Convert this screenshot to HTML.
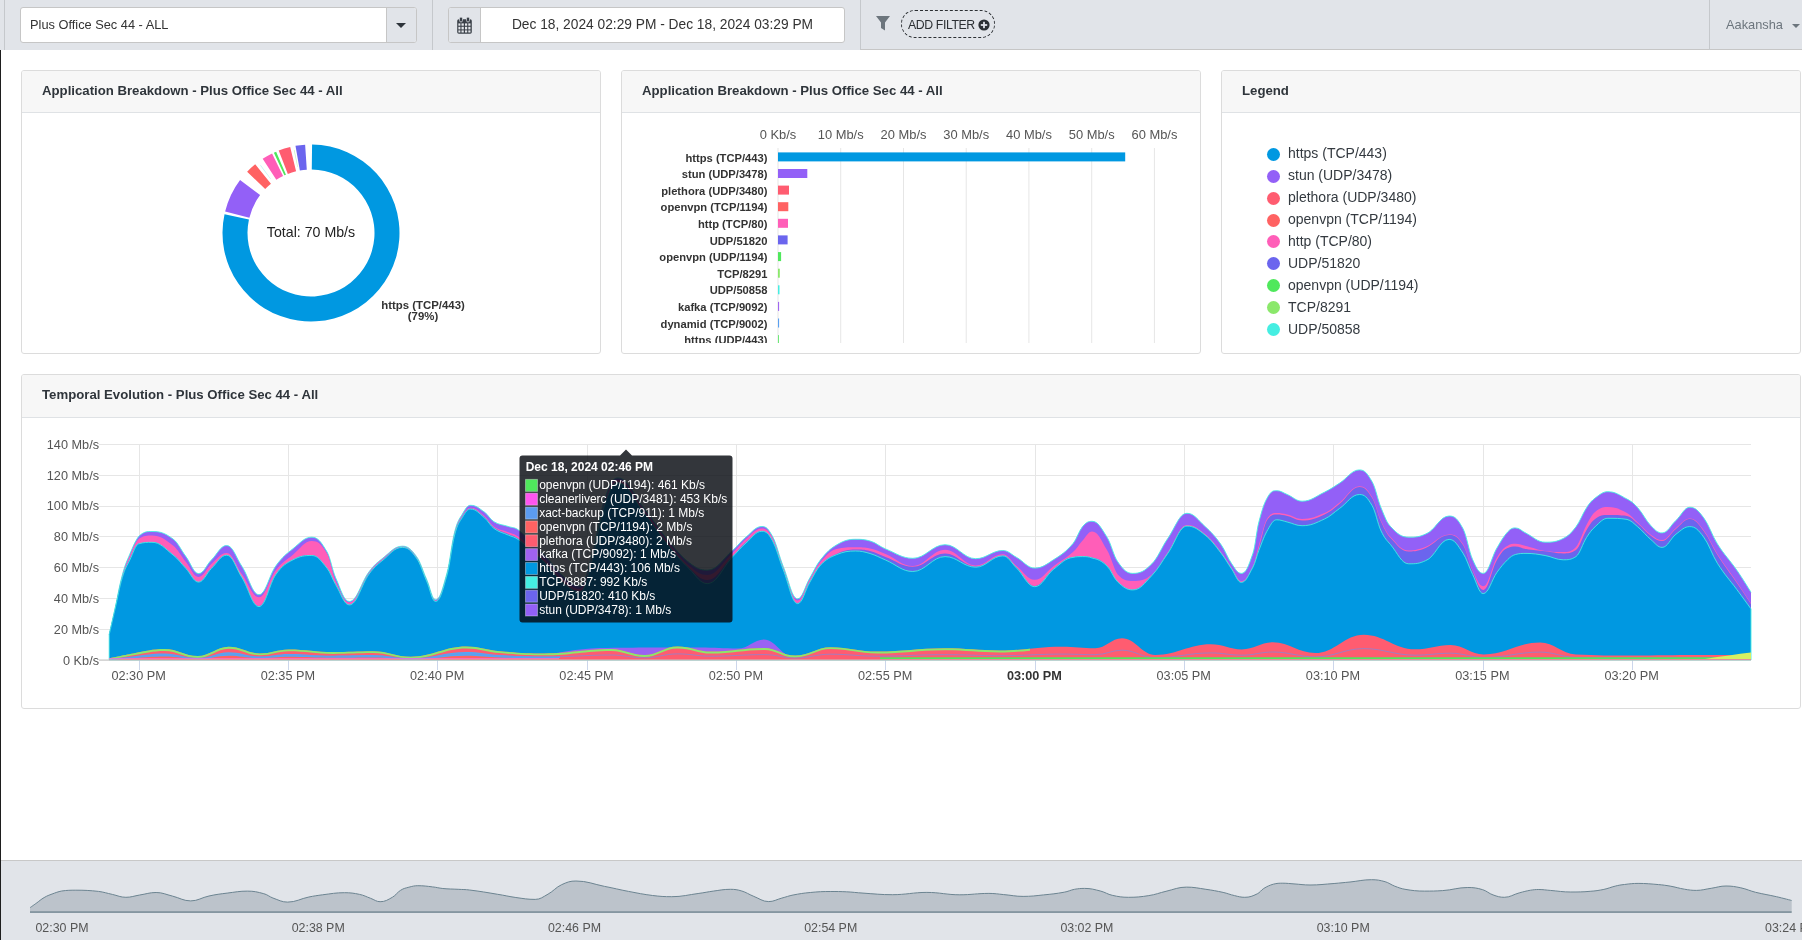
<!DOCTYPE html>
<html><head><meta charset="utf-8">
<style>
*{box-sizing:border-box;margin:0;padding:0}
html,body{width:1802px;height:940px;overflow:hidden;background:#fff;-webkit-font-smoothing:antialiased;font-family:"Liberation Sans",sans-serif;color:#333}
.abs{position:absolute}
.hdr,.panel,svg.abs{will-change:transform}
.hdr{position:absolute;left:0;top:0;width:1802px;height:50px;background:#e1e4e9}
.vsep{position:absolute;top:0;width:1px;height:50px;background:#c5c8cc}
.sel{position:absolute;left:20px;top:7px;width:397px;height:36px;border:1px solid #c6c6c6;border-radius:3px;background:#fff;overflow:hidden}
.sel .txt{position:absolute;left:9px;top:9px;font-size:12.8px;color:#333;white-space:nowrap}
.sel .btn{position:absolute;right:0;top:0;width:30px;height:34px;border-left:1px solid #c6c6c6;background:#e1e4e9}
.caret{position:absolute;width:0;height:0;border-left:5px solid transparent;border-right:5px solid transparent;border-top:5px solid #2d333a}
.dg{position:absolute;left:448px;top:7px;width:397px;height:36px;border:1px solid #c6c6c6;border-radius:3px;background:#fff;overflow:hidden}
.dg .cal{position:absolute;left:0;top:0;width:32px;height:34px;background:#e1e4e9;border-right:1px solid #c6c6c6}
.dg .txt{position:absolute;left:32px;right:0;top:9px;text-align:center;font-size:13.75px;color:#333;white-space:nowrap}
.pill{position:absolute;left:901px;top:10px;width:94px;height:28px;border:1px dashed #2b2f33;border-radius:14px}
.pill .txt{position:absolute;left:6px;top:6.5px;font-size:12.3px;letter-spacing:-0.4px;color:#2b2f33;white-space:nowrap}
.user{position:absolute;left:1726px;top:16.7px;font-size:12.8px;color:#6c757d;white-space:nowrap}
.panel{position:absolute;border:1px solid #dcdcdc;border-radius:3px;background:#fff;overflow:hidden}
.ph{position:absolute;left:0;top:0;right:0;height:42px;background:#f7f7f7;border-bottom:1px solid #dfe2e5}
.ph .t{position:absolute;left:20px;top:12px;font-size:13.2px;font-weight:bold;color:#2f353b;white-space:nowrap}
.li{position:absolute;left:66px;height:20px;font-size:14px;line-height:20px;color:#343a40;white-space:nowrap}
.li .dot{position:absolute;left:-21px;top:4.5px;width:13px;height:13px;border-radius:50%}
svg text{font-family:"Liberation Sans",sans-serif}
.ax{font-size:12.7px;fill:#555}
.bax{font-size:12.9px;fill:#555}
.ax.b{font-weight:bold;fill:#333}
.bl{font-size:11.4px;font-weight:bold;fill:#333}
.bl2{font-size:11.2px;font-weight:bold;fill:#333}
.nv{font-size:12.4px;fill:#555}
.tt{font-size:12px;fill:#fff}
.nav{position:absolute;left:1px;top:860px;width:1801px;height:80px;background:#e1e4e9;border-top:1px solid #c8c8c8}
</style></head><body>
<div class="hdr">
  <div class="vsep" style="left:4px"></div>
  <div class="sel"><div class="txt">Plus Office Sec 44 - ALL</div><div class="btn"><div class="caret" style="left:8.5px;top:15px"></div></div></div>
  <div class="vsep" style="left:432px"></div>
  <div class="dg">
    <div class="cal">
      <svg width="32" height="34" style="position:absolute;left:0;top:0">
        <rect x="8.2" y="11.3" width="14.6" height="14.4" rx="1.6" fill="#3a4048"/>
        <rect x="10.5" y="9" width="3" height="5" rx="1.5" fill="#3a4048" stroke="#e1e4e9" stroke-width="0.7"/>
        <rect x="17.5" y="9" width="3" height="5" rx="1.5" fill="#3a4048" stroke="#e1e4e9" stroke-width="0.7"/>
        <g fill="#e4e7eb">
          <rect x="9.4" y="15.4" width="2" height="2.3"/><rect x="12.5" y="15.4" width="2.3" height="2.3"/><rect x="16" y="15.4" width="2.2" height="2.3"/><rect x="19.3" y="15.4" width="2.2" height="2.3"/>
          <rect x="9.4" y="18.8" width="2" height="2.6"/><rect x="12.5" y="18.8" width="2.3" height="2.6"/><rect x="16" y="18.8" width="2.2" height="2.6"/><rect x="19.3" y="18.8" width="2.2" height="2.6"/>
          <rect x="9.4" y="22.4" width="2" height="2.1"/><rect x="12.5" y="22.4" width="2.3" height="2.1"/><rect x="16" y="22.4" width="2.2" height="2.1"/><rect x="19.3" y="22.4" width="2.2" height="2.1"/>
        </g>
      </svg>
    </div>
    <div class="txt">Dec 18, 2024 02:29 PM - Dec 18, 2024 03:29 PM</div>
  </div>
  <div class="vsep" style="left:860px"></div>
  <div class="abs" style="left:861px;top:49px;width:941px;height:1px;background:#c6c6c6"></div>
  <svg class="abs" style="left:870px;top:10px" width="28" height="28">
    <path d="M6,6 H20 L15,12.5 V20.5 L11,18 V12.5 Z" fill="#6c757d"/>
  </svg>
  <div class="pill"><div class="txt">ADD FILTER</div>
    <svg class="abs" style="left:76px;top:8px" width="12" height="12"><circle cx="6" cy="6" r="5.6" fill="#2b2f33"/><rect x="2.8" y="5.1" width="6.4" height="1.8" fill="#e1e4e9"/><rect x="5.1" y="2.8" width="1.8" height="6.4" fill="#e1e4e9"/></svg>
  </div>
  <div class="vsep" style="left:1709px"></div>
  <div class="user">Aakansha</div>
  <div class="caret" style="left:1792px;top:24px;border-left-width:4px;border-right-width:4px;border-top-width:4px;border-top-color:#6c757d"></div>
</div>
<div class="abs" style="left:0;top:50px;width:1px;height:890px;background:#1e1e1e"></div>

<div class="panel" style="left:21px;top:70px;width:580px;height:284px"><div class="ph"><div class="t">Application Breakdown - Plus Office Sec 44 - All</div></div></div>
<div class="panel" style="left:621px;top:70px;width:580px;height:284px"><div class="ph"><div class="t">Application Breakdown - Plus Office Sec 44 - All</div></div></div>
<div class="panel" style="left:1221px;top:70px;width:580px;height:284px"><div class="ph"><div class="t">Legend</div></div><div class="li" style="top:72.3px"><span class="dot" style="background:#0098e1"></span>https (TCP/443)</div><div class="li" style="top:94.2px"><span class="dot" style="background:#9360f7"></span>stun (UDP/3478)</div><div class="li" style="top:116.1px"><span class="dot" style="background:#ff5c70"></span>plethora (UDP/3480)</div><div class="li" style="top:138.0px"><span class="dot" style="background:#ff6262"></span>openvpn (TCP/1194)</div><div class="li" style="top:159.9px"><span class="dot" style="background:#ff5eb8"></span>http (TCP/80)</div><div class="li" style="top:181.8px"><span class="dot" style="background:#6b65ee"></span>UDP/51820</div><div class="li" style="top:203.7px"><span class="dot" style="background:#4fe85c"></span>openvpn (UDP/1194)</div><div class="li" style="top:225.6px"><span class="dot" style="background:#8be86b"></span>TCP/8291</div><div class="li" style="top:247.5px"><span class="dot" style="background:#45eee2"></span>UDP/50858</div></div>
<div class="panel" style="left:21px;top:374px;width:1780px;height:335px"><div class="ph" style="height:43px"><div class="t">Temporal Evolution - Plus Office Sec 44 - All</div></div></div>

<svg class="abs" style="left:0;top:0" width="1802" height="940">
  <g><path fill="#0098e1" d="M312.08,144.51A88.5,88.5 0 1 1 224.53,214.15L248.96,219.47A63.5,63.5 0 1 0 311.78,169.50Z"/><path fill="#9360f7" d="M225.13,211.59A88.5,88.5 0 0 1 240.04,180.11L260.09,195.05A63.5,63.5 0 0 0 249.39,217.64Z"/><path fill="#ff6262" d="M247.12,171.75A88.5,88.5 0 0 1 255.19,164.32L270.95,183.72A63.5,63.5 0 0 0 265.17,189.05Z"/><path fill="#ff5eb8" d="M262.67,158.86A88.5,88.5 0 0 1 272.07,153.52L283.06,175.98A63.5,63.5 0 0 0 276.32,179.80Z"/><path fill="#4fe85c" d="M273.88,152.66A88.5,88.5 0 0 1 276.14,151.66L285.98,174.63A63.5,63.5 0 0 0 284.36,175.36Z"/><path fill="#ff5c70" d="M278.71,150.60A88.5,88.5 0 0 1 290.19,146.98L296.07,171.28A63.5,63.5 0 0 0 287.83,173.88Z"/><path fill="#6b65ee" d="M295.48,145.87A88.5,88.5 0 0 1 305.13,144.69L306.79,169.64A63.5,63.5 0 0 0 299.86,170.48Z"/><path fill="#bff7f3" d="M260.15,165.52A84.5,84.5 0 0 1 260.74,165.07L270.85,178.74A67.5,67.5 0 0 0 270.38,179.09Z"/><path fill="#c9f5c5" d="M293.86,150.26A84.5,84.5 0 0 1 294.59,150.11L297.89,166.79A67.5,67.5 0 0 0 297.31,166.90Z"/></g>
  <text x="311" y="236.8" text-anchor="middle" style="font-size:14.2px;fill:#222">Total: 70 Mb/s</text>
  <text x="423" y="309.3" text-anchor="middle" class="bl">https (TCP/443)</text>
  <text x="423" y="320.3" text-anchor="middle" class="bl">(79%)</text>
  <defs><clipPath id="bc"><rect x="622" y="113" width="578" height="230"/></clipPath></defs>
  <g clip-path="url(#bc)"><rect x="777.5" y="148" width="1" height="200" fill="#e6e6e6"/><rect x="840.2" y="148" width="1" height="200" fill="#e6e6e6"/><rect x="903.0" y="148" width="1" height="200" fill="#e6e6e6"/><rect x="965.7" y="148" width="1" height="200" fill="#e6e6e6"/><rect x="1028.4" y="148" width="1" height="200" fill="#e6e6e6"/><rect x="1091.2" y="148" width="1" height="200" fill="#e6e6e6"/><rect x="1153.9" y="148" width="1" height="200" fill="#e6e6e6"/><text x="778.0" y="139.2" text-anchor="middle" class="bax">0 Kb/s</text><text x="840.7" y="139.2" text-anchor="middle" class="bax">10 Mb/s</text><text x="903.5" y="139.2" text-anchor="middle" class="bax">20 Mb/s</text><text x="966.2" y="139.2" text-anchor="middle" class="bax">30 Mb/s</text><text x="1028.9" y="139.2" text-anchor="middle" class="bax">40 Mb/s</text><text x="1091.7" y="139.2" text-anchor="middle" class="bax">50 Mb/s</text><text x="1154.4" y="139.2" text-anchor="middle" class="bax">60 Mb/s</text><rect x="778" y="152.4" width="347.2" height="9" fill="#0098e1"/><text x="767.5" y="161.5" text-anchor="end" class="bl2">https (TCP/443)</text><rect x="778" y="169.0" width="29.3" height="9" fill="#9360f7"/><text x="767.5" y="178.1" text-anchor="end" class="bl2">stun (UDP/3478)</text><rect x="778" y="185.6" width="11.0" height="9" fill="#ff5c70"/><text x="767.5" y="194.7" text-anchor="end" class="bl2">plethora (UDP/3480)</text><rect x="778" y="202.2" width="10.3" height="9" fill="#ff6262"/><text x="767.5" y="211.3" text-anchor="end" class="bl2">openvpn (TCP/1194)</text><rect x="778" y="218.8" width="10.0" height="9" fill="#ff5eb8"/><text x="767.5" y="227.9" text-anchor="end" class="bl2">http (TCP/80)</text><rect x="778" y="235.4" width="9.6" height="9" fill="#6b65ee"/><text x="767.5" y="244.5" text-anchor="end" class="bl2">UDP/51820</text><rect x="778" y="252.1" width="3.1" height="9" fill="#4fe85c"/><text x="767.5" y="261.2" text-anchor="end" class="bl2">openvpn (UDP/1194)</text><rect x="778" y="268.7" width="1.8" height="9" fill="#8be86b"/><text x="767.5" y="277.8" text-anchor="end" class="bl2">TCP/8291</text><rect x="778" y="285.3" width="1.5" height="9" fill="#45eee2"/><text x="767.5" y="294.4" text-anchor="end" class="bl2">UDP/50858</text><rect x="778" y="301.9" width="1.1" height="9" fill="#a066f0"/><text x="767.5" y="311.0" text-anchor="end" class="bl2">kafka (TCP/9092)</text><rect x="778" y="318.5" width="1.1" height="9" fill="#5aa0f0"/><text x="767.5" y="327.6" text-anchor="end" class="bl2">dynamid (TCP/9002)</text><rect x="778" y="335.1" width="0.8" height="9" fill="#4fe85c"/><text x="767.5" y="344.2" text-anchor="end" class="bl2">https (UDP/443)</text></g>
  <g><rect x="99" y="444" width="1652" height="1" fill="#e6e6e6"/><text x="99" y="448.6" text-anchor="end" class="ax">140 Mb/s</text><rect x="99" y="475" width="1652" height="1" fill="#e6e6e6"/><text x="99" y="479.5" text-anchor="end" class="ax">120 Mb/s</text><rect x="99" y="506" width="1652" height="1" fill="#e6e6e6"/><text x="99" y="510.3" text-anchor="end" class="ax">100 Mb/s</text><rect x="99" y="536" width="1652" height="1" fill="#e6e6e6"/><text x="99" y="541.2" text-anchor="end" class="ax">80 Mb/s</text><rect x="99" y="567" width="1652" height="1" fill="#e6e6e6"/><text x="99" y="572.0" text-anchor="end" class="ax">60 Mb/s</text><rect x="99" y="598" width="1652" height="1" fill="#e6e6e6"/><text x="99" y="602.9" text-anchor="end" class="ax">40 Mb/s</text><rect x="99" y="629" width="1652" height="1" fill="#e6e6e6"/><text x="99" y="633.8" text-anchor="end" class="ax">20 Mb/s</text><text x="99" y="664.6" text-anchor="end" class="ax">0 Kb/s</text><rect x="139" y="444" width="1" height="216" fill="#e6e6e6"/><rect x="139" y="660" width="1" height="10" fill="#ccd6eb"/><text x="138.6" y="680.3" text-anchor="middle" class="ax">02:30 PM</text><rect x="288" y="444" width="1" height="216" fill="#e6e6e6"/><rect x="288" y="660" width="1" height="10" fill="#ccd6eb"/><text x="287.9" y="680.3" text-anchor="middle" class="ax">02:35 PM</text><rect x="437" y="444" width="1" height="216" fill="#e6e6e6"/><rect x="437" y="660" width="1" height="10" fill="#ccd6eb"/><text x="437.2" y="680.3" text-anchor="middle" class="ax">02:40 PM</text><rect x="587" y="444" width="1" height="216" fill="#e6e6e6"/><rect x="587" y="660" width="1" height="10" fill="#ccd6eb"/><text x="586.5" y="680.3" text-anchor="middle" class="ax">02:45 PM</text><rect x="736" y="444" width="1" height="216" fill="#e6e6e6"/><rect x="736" y="660" width="1" height="10" fill="#ccd6eb"/><text x="735.8" y="680.3" text-anchor="middle" class="ax">02:50 PM</text><rect x="885" y="444" width="1" height="216" fill="#e6e6e6"/><rect x="885" y="660" width="1" height="10" fill="#ccd6eb"/><text x="885.1" y="680.3" text-anchor="middle" class="ax">02:55 PM</text><rect x="1035" y="444" width="1" height="216" fill="#e6e6e6"/><rect x="1035" y="660" width="1" height="10" fill="#ccd6eb"/><text x="1034.4" y="680.3" text-anchor="middle" class="ax b">03:00 PM</text><rect x="1184" y="444" width="1" height="216" fill="#e6e6e6"/><rect x="1184" y="660" width="1" height="10" fill="#ccd6eb"/><text x="1183.7" y="680.3" text-anchor="middle" class="ax">03:05 PM</text><rect x="1333" y="444" width="1" height="216" fill="#e6e6e6"/><rect x="1333" y="660" width="1" height="10" fill="#ccd6eb"/><text x="1333.0" y="680.3" text-anchor="middle" class="ax">03:10 PM</text><rect x="1483" y="444" width="1" height="216" fill="#e6e6e6"/><rect x="1483" y="660" width="1" height="10" fill="#ccd6eb"/><text x="1482.3" y="680.3" text-anchor="middle" class="ax">03:15 PM</text><rect x="1632" y="444" width="1" height="216" fill="#e6e6e6"/><rect x="1632" y="660" width="1" height="10" fill="#ccd6eb"/><text x="1631.6" y="680.3" text-anchor="middle" class="ax">03:20 PM</text><path fill="#9360f7" d="M109.2,634.6C109.2,634.6,112.6,619.7,114.9,609.3C117.9,595.9,119.3,586.0,122.3,575.1C125.3,564.0,126.8,561.3,129.8,554.2C133.4,545.8,135.1,541.3,138.7,536.4C144.0,531.5,146.7,531.5,152.0,531.5C160.4,531.5,164.6,532.8,173.0,539.0C178.2,542.8,180.7,549.6,185.9,556.6C191.0,563.5,193.5,573.6,198.6,573.6C203.7,573.6,206.3,565.1,211.4,560.0C217.5,553.9,220.6,545.5,226.7,545.5C232.8,545.5,235.9,557.3,242.0,566.6C248.8,577.0,252.2,594.7,259.0,594.7C265.8,594.7,269.2,574.9,276.0,565.7C282.8,556.5,286.2,554.1,293.0,548.7C300.5,542.7,304.3,537.2,311.8,537.2C317.9,537.2,321.0,541.7,327.1,552.1C330.5,557.9,332.2,570.1,335.6,577.7C341.1,589.9,343.8,601.5,349.3,601.5C357.2,601.5,361.2,582.0,369.1,571.7C374.2,565.0,376.8,562.8,381.9,558.9C390.1,552.6,394.1,546.2,402.3,546.2C407.9,546.2,410.8,548.7,416.4,556.4C420.5,562.0,422.5,570.1,426.6,579.3C430.2,587.4,431.9,599.7,435.5,599.7C440.1,599.7,442.4,589.3,447.0,573.0C450.0,562.2,451.6,543.8,454.6,532.1C457.7,520.3,459.2,519.4,462.3,514.2C465.6,508.6,467.3,505.3,470.6,505.3C476.1,505.3,478.9,508.2,484.4,512.1C488.2,514.8,490.1,519.4,493.9,521.7C499.7,525.2,502.5,524.5,508.3,526.5C512.5,528.0,514.6,527.0,518.8,530.3C529.3,538.6,534.5,544.8,545.0,555.6C551.8,562.6,555.2,569.1,562.0,575.0C569.2,581.3,572.8,586.0,580.0,586.0C584.8,586.0,587.2,571.9,592.0,555.0C597.0,537.5,599.4,514.8,604.4,500.0C609.8,483.9,612.5,477.9,617.9,477.9C628.6,477.9,634.0,495.9,644.7,509.2C653.6,520.3,658.1,528.2,667.0,538.9C676.0,549.6,680.4,555.8,689.4,562.8C696.5,568.3,700.1,570.2,707.2,570.2C717.4,570.2,722.4,559.1,732.6,550.4C738.0,545.8,740.6,541.5,746.0,537.1C752.4,531.9,755.5,526.5,761.9,526.5C766.2,526.5,768.3,528.6,772.6,536.6C776.8,544.5,779.0,555.9,783.2,566.4C789.0,580.7,791.8,598.8,797.6,598.8C802.5,598.8,804.9,586.4,809.8,578.1C814.0,570.9,816.2,565.3,820.4,560.0C826.8,552.1,830.0,548.9,836.4,545.1C844.0,540.6,847.9,539.3,855.5,539.3C861.3,539.3,864.2,539.3,870.0,541.0C876.2,542.7,879.3,546.4,885.5,548.9C896.4,553.3,901.9,558.3,912.8,558.3C925.7,558.3,932.2,544.7,945.1,544.7C957.3,544.7,963.5,558.7,975.7,558.7C986.5,558.7,992.0,550.5,1002.8,550.5C1008.3,550.5,1011.1,554.4,1016.6,557.4C1023.8,561.4,1027.5,568.1,1034.7,568.1C1042.3,568.1,1046.2,564.5,1053.8,559.6C1061.5,554.7,1065.3,552.4,1073.0,543.6C1076.8,539.2,1078.8,531.1,1082.6,526.6C1086.4,522.2,1088.3,521.3,1092.1,521.3C1098.1,521.3,1101.0,527.8,1107.0,537.2C1111.3,544.0,1113.4,555.7,1117.7,561.7C1123.7,570.2,1126.8,573.4,1132.8,573.4C1140.4,573.4,1144.3,571.4,1151.9,563.8C1158.3,557.4,1161.5,547.5,1167.9,538.3C1175.5,527.3,1179.4,513.3,1187.0,513.3C1194.2,513.3,1197.9,519.9,1205.1,526.6C1211.5,532.5,1214.7,535.7,1221.1,544.7C1225.3,550.6,1227.5,557.8,1231.7,563.8C1235.5,569.3,1237.5,573.4,1241.3,573.4C1246.0,573.4,1248.3,566.9,1253.0,553.2C1255.4,546.3,1256.5,530.9,1258.9,522.0C1262.5,508.3,1264.3,502.7,1267.9,496.7C1271.5,490.7,1273.2,490.7,1276.8,490.7C1281.0,490.7,1283.0,492.8,1287.2,494.5C1293.2,497.0,1296.1,501.2,1302.1,501.2C1311.1,501.2,1315.5,496.5,1324.5,492.2C1330.5,489.3,1333.4,487.1,1339.4,483.3C1347.4,478.2,1351.5,469.9,1359.5,469.9C1364.5,469.9,1367.1,472.9,1372.1,481.8C1375.7,488.1,1377.5,499.3,1381.1,508.0C1384.9,517.2,1386.8,522.6,1390.6,526.6C1397.8,534.3,1401.5,537.2,1408.7,537.2C1415.5,537.2,1418.9,537.2,1425.7,534.0C1435.1,530.8,1439.7,516.0,1449.1,516.0C1454.7,516.0,1457.4,518.4,1463.0,528.7C1466.8,535.8,1468.8,551.1,1472.6,559.6C1476.8,569.0,1479.0,573.4,1483.2,573.4C1488.7,573.4,1491.5,557.3,1497.0,547.9C1501.3,540.7,1503.4,536.6,1507.7,531.9C1510.7,528.6,1512.3,527.9,1515.3,527.9C1519.6,527.9,1521.7,531.1,1526.0,533.2C1533.6,536.9,1537.5,542.2,1545.1,542.2C1552.3,542.2,1556.0,542.1,1563.2,538.5C1568.3,535.9,1570.9,533.5,1576.0,526.8C1580.2,521.2,1582.4,514.1,1586.6,507.7C1590.0,502.6,1591.7,500.7,1595.1,498.1C1600.2,494.3,1602.8,491.7,1607.9,491.7C1615.5,491.7,1619.4,495.0,1627.0,499.1C1631.3,501.4,1633.4,502.9,1637.7,507.7C1643.1,513.7,1645.7,520.4,1651.1,525.9C1655.5,530.4,1657.7,532.9,1662.1,532.9C1667.7,532.9,1670.4,525.5,1676.0,520.4C1681.5,515.3,1684.3,507.3,1689.8,507.3C1695.3,507.3,1698.1,510.4,1703.6,517.7C1709.1,525.0,1711.9,535.2,1717.4,543.9C1725.2,556.2,1729.0,559.0,1736.8,570.2C1742.5,578.4,1751.0,592.3,1751.0,592.3L1751.0,660L109.2,660Z"/><path fill="none" stroke="#45eee2" stroke-width="0.9" d="M109.2,634.6C109.2,634.6,112.6,619.7,114.9,609.3C117.9,595.9,119.3,586.0,122.3,575.1C125.3,564.0,126.8,561.3,129.8,554.2C133.4,545.8,135.1,541.3,138.7,536.4C144.0,531.5,146.7,531.5,152.0,531.5C160.4,531.5,164.6,532.8,173.0,539.0C178.2,542.8,180.7,549.6,185.9,556.6C191.0,563.5,193.5,573.6,198.6,573.6C203.7,573.6,206.3,565.1,211.4,560.0C217.5,553.9,220.6,545.5,226.7,545.5C232.8,545.5,235.9,557.3,242.0,566.6C248.8,577.0,252.2,594.7,259.0,594.7C265.8,594.7,269.2,574.9,276.0,565.7C282.8,556.5,286.2,554.1,293.0,548.7C300.5,542.7,304.3,537.2,311.8,537.2C317.9,537.2,321.0,541.7,327.1,552.1C330.5,557.9,332.2,570.1,335.6,577.7C341.1,589.9,343.8,601.5,349.3,601.5C357.2,601.5,361.2,582.0,369.1,571.7C374.2,565.0,376.8,562.8,381.9,558.9C390.1,552.6,394.1,546.2,402.3,546.2C407.9,546.2,410.8,548.7,416.4,556.4C420.5,562.0,422.5,570.1,426.6,579.3C430.2,587.4,431.9,599.7,435.5,599.7C440.1,599.7,442.4,589.3,447.0,573.0C450.0,562.2,451.6,543.8,454.6,532.1C457.7,520.3,459.2,519.4,462.3,514.2C465.6,508.6,467.3,505.3,470.6,505.3C476.1,505.3,478.9,508.2,484.4,512.1C488.2,514.8,490.1,519.4,493.9,521.7C499.7,525.2,502.5,524.5,508.3,526.5C512.5,528.0,514.6,527.0,518.8,530.3C529.3,538.6,534.5,544.8,545.0,555.6C551.8,562.6,555.2,569.1,562.0,575.0C569.2,581.3,572.8,586.0,580.0,586.0C584.8,586.0,587.2,571.9,592.0,555.0C597.0,537.5,599.4,514.8,604.4,500.0C609.8,483.9,612.5,477.9,617.9,477.9C628.6,477.9,634.0,495.9,644.7,509.2C653.6,520.3,658.1,528.2,667.0,538.9C676.0,549.6,680.4,555.8,689.4,562.8C696.5,568.3,700.1,570.2,707.2,570.2C717.4,570.2,722.4,559.1,732.6,550.4C738.0,545.8,740.6,541.5,746.0,537.1C752.4,531.9,755.5,526.5,761.9,526.5C766.2,526.5,768.3,528.6,772.6,536.6C776.8,544.5,779.0,555.9,783.2,566.4C789.0,580.7,791.8,598.8,797.6,598.8C802.5,598.8,804.9,586.4,809.8,578.1C814.0,570.9,816.2,565.3,820.4,560.0C826.8,552.1,830.0,548.9,836.4,545.1C844.0,540.6,847.9,539.3,855.5,539.3C861.3,539.3,864.2,539.3,870.0,541.0C876.2,542.7,879.3,546.4,885.5,548.9C896.4,553.3,901.9,558.3,912.8,558.3C925.7,558.3,932.2,544.7,945.1,544.7C957.3,544.7,963.5,558.7,975.7,558.7C986.5,558.7,992.0,550.5,1002.8,550.5C1008.3,550.5,1011.1,554.4,1016.6,557.4C1023.8,561.4,1027.5,568.1,1034.7,568.1C1042.3,568.1,1046.2,564.5,1053.8,559.6C1061.5,554.7,1065.3,552.4,1073.0,543.6C1076.8,539.2,1078.8,531.1,1082.6,526.6C1086.4,522.2,1088.3,521.3,1092.1,521.3C1098.1,521.3,1101.0,527.8,1107.0,537.2C1111.3,544.0,1113.4,555.7,1117.7,561.7C1123.7,570.2,1126.8,573.4,1132.8,573.4C1140.4,573.4,1144.3,571.4,1151.9,563.8C1158.3,557.4,1161.5,547.5,1167.9,538.3C1175.5,527.3,1179.4,513.3,1187.0,513.3C1194.2,513.3,1197.9,519.9,1205.1,526.6C1211.5,532.5,1214.7,535.7,1221.1,544.7C1225.3,550.6,1227.5,557.8,1231.7,563.8C1235.5,569.3,1237.5,573.4,1241.3,573.4C1246.0,573.4,1248.3,566.9,1253.0,553.2C1255.4,546.3,1256.5,530.9,1258.9,522.0C1262.5,508.3,1264.3,502.7,1267.9,496.7C1271.5,490.7,1273.2,490.7,1276.8,490.7C1281.0,490.7,1283.0,492.8,1287.2,494.5C1293.2,497.0,1296.1,501.2,1302.1,501.2C1311.1,501.2,1315.5,496.5,1324.5,492.2C1330.5,489.3,1333.4,487.1,1339.4,483.3C1347.4,478.2,1351.5,469.9,1359.5,469.9C1364.5,469.9,1367.1,472.9,1372.1,481.8C1375.7,488.1,1377.5,499.3,1381.1,508.0C1384.9,517.2,1386.8,522.6,1390.6,526.6C1397.8,534.3,1401.5,537.2,1408.7,537.2C1415.5,537.2,1418.9,537.2,1425.7,534.0C1435.1,530.8,1439.7,516.0,1449.1,516.0C1454.7,516.0,1457.4,518.4,1463.0,528.7C1466.8,535.8,1468.8,551.1,1472.6,559.6C1476.8,569.0,1479.0,573.4,1483.2,573.4C1488.7,573.4,1491.5,557.3,1497.0,547.9C1501.3,540.7,1503.4,536.6,1507.7,531.9C1510.7,528.6,1512.3,527.9,1515.3,527.9C1519.6,527.9,1521.7,531.1,1526.0,533.2C1533.6,536.9,1537.5,542.2,1545.1,542.2C1552.3,542.2,1556.0,542.1,1563.2,538.5C1568.3,535.9,1570.9,533.5,1576.0,526.8C1580.2,521.2,1582.4,514.1,1586.6,507.7C1590.0,502.6,1591.7,500.7,1595.1,498.1C1600.2,494.3,1602.8,491.7,1607.9,491.7C1615.5,491.7,1619.4,495.0,1627.0,499.1C1631.3,501.4,1633.4,502.9,1637.7,507.7C1643.1,513.7,1645.7,520.4,1651.1,525.9C1655.5,530.4,1657.7,532.9,1662.1,532.9C1667.7,532.9,1670.4,525.5,1676.0,520.4C1681.5,515.3,1684.3,507.3,1689.8,507.3C1695.3,507.3,1698.1,510.4,1703.6,517.7C1709.1,525.0,1711.9,535.2,1717.4,543.9C1725.2,556.2,1729.0,559.0,1736.8,570.2C1742.5,578.4,1751.0,592.3,1751.0,592.3"/><path fill="#ff5eb8" d="M109.2,634.6C109.2,634.6,112.6,619.7,114.9,609.5C117.9,596.3,119.3,586.6,122.3,576.0C125.3,565.2,126.8,562.8,129.8,556.0C133.4,548.0,135.1,542.5,138.7,539.0C144.0,535.5,146.7,535.5,152.0,535.5C160.4,535.5,164.6,538.9,173.0,545.5C178.2,549.5,180.7,555.7,185.9,562.0C191.0,568.3,193.5,577.0,198.6,577.0C203.7,577.0,206.3,568.4,211.4,564.0C217.5,558.8,220.6,553.0,226.7,553.0C232.8,553.0,235.9,565.9,242.0,574.3C248.8,583.6,252.2,597.2,259.0,597.2C265.8,597.2,269.2,578.5,276.0,570.0C282.8,561.5,286.2,560.2,293.0,554.7C300.5,548.6,304.3,541.0,311.8,541.0C317.9,541.0,321.0,543.5,327.1,553.8C330.5,559.5,332.2,573.5,335.6,581.0C341.1,593.0,343.8,602.5,349.3,602.5C357.2,602.5,361.2,582.9,369.1,572.5C374.2,565.7,376.8,563.5,381.9,559.5C390.1,553.2,394.1,546.8,402.3,546.8C407.9,546.8,410.8,549.3,416.4,557.0C420.5,562.6,422.5,570.7,426.6,580.0C430.2,588.1,431.9,600.5,435.5,600.5C440.1,600.5,442.4,590.3,447.0,574.0C450.0,563.3,451.6,544.6,454.6,533.0C457.7,521.2,459.2,520.4,462.3,515.5C465.6,510.3,467.3,507.8,470.6,507.8C476.1,507.8,478.9,511.5,484.4,515.9C488.2,518.9,490.1,523.9,493.9,526.5C499.7,530.4,502.5,529.8,508.3,532.2C512.5,534.0,514.6,533.8,518.8,537.0C529.3,544.9,534.5,549.8,545.0,560.0C551.8,566.6,555.2,573.4,562.0,579.0C569.2,585.0,572.8,589.0,580.0,589.0C584.8,589.0,587.2,574.9,592.0,558.0C597.0,540.5,599.4,517.9,604.4,503.0C609.8,486.7,612.5,480.0,617.9,480.0C628.6,480.0,634.0,497.7,644.7,511.0C653.6,522.1,658.1,530.0,667.0,541.0C676.0,552.0,680.4,558.4,689.4,566.0C696.5,572.0,700.1,575.0,707.2,575.0C717.4,575.0,722.4,562.4,732.6,553.0C738.0,548.0,740.6,543.5,746.0,539.0C752.4,533.7,755.5,528.5,761.9,528.5C766.2,528.5,768.3,530.2,772.6,538.0C776.8,545.8,779.0,556.9,783.2,567.5C789.0,581.9,791.8,600.5,797.6,600.5C802.5,600.5,804.9,587.7,809.8,579.5C814.0,572.3,816.2,566.9,820.4,562.0C826.8,554.7,830.0,550.8,836.4,549.0C844.0,547.2,847.9,547.2,855.5,547.2C861.3,547.2,864.2,547.2,870.0,548.5C876.2,549.8,879.3,551.5,885.5,554.0C896.4,558.5,901.9,566.0,912.8,566.0C925.7,566.0,932.2,549.8,945.1,549.8C957.3,549.8,963.5,565.5,975.7,565.5C986.5,565.5,992.0,554.3,1002.8,554.3C1008.3,554.3,1011.1,561.6,1016.6,566.0C1023.8,571.8,1027.5,579.8,1034.7,579.8C1042.3,579.8,1046.2,571.5,1053.8,566.0C1061.5,560.4,1065.3,558.9,1073.0,552.1C1076.8,548.7,1078.8,544.6,1082.6,540.4C1086.4,536.3,1088.3,531.4,1092.1,531.4C1098.1,531.4,1101.0,540.0,1107.0,550.0C1111.3,557.2,1113.4,568.1,1117.7,574.5C1123.7,580.9,1126.8,580.9,1132.8,580.9C1140.4,580.9,1144.3,580.8,1151.9,574.5C1158.3,569.2,1161.5,561.0,1167.9,552.0C1175.5,541.2,1179.4,525.0,1187.0,525.0C1194.2,525.0,1197.9,528.3,1205.1,534.0C1211.5,539.1,1214.7,543.8,1221.1,552.0C1225.3,557.4,1227.5,561.9,1231.7,568.0C1235.5,573.5,1237.5,581.0,1241.3,581.0C1246.0,581.0,1248.3,575.6,1253.0,566.0C1255.4,561.2,1256.5,552.7,1258.9,545.0C1262.5,533.3,1264.3,522.1,1267.9,517.6C1271.5,513.1,1273.2,513.1,1276.8,513.1C1281.0,513.1,1283.0,513.6,1287.2,514.6C1293.2,516.0,1296.1,519.0,1302.1,519.0C1311.1,519.0,1315.5,517.0,1324.5,513.1C1330.5,510.5,1333.4,507.3,1339.4,502.7C1347.4,496.5,1351.5,486.3,1359.5,486.3C1364.5,486.3,1367.1,488.9,1372.1,497.0C1375.7,502.8,1377.5,513.2,1381.1,521.0C1384.9,529.2,1386.8,532.9,1390.6,537.0C1397.8,544.7,1401.5,550.5,1408.7,550.5C1415.5,550.5,1418.9,549.5,1425.7,546.8C1435.1,543.1,1439.7,534.5,1449.1,534.5C1454.7,534.5,1457.4,535.6,1463.0,544.0C1466.8,549.8,1468.8,562.0,1472.6,570.0C1476.8,578.9,1479.0,586.2,1483.2,586.2C1488.7,586.2,1491.5,566.5,1497.0,557.4C1501.3,550.3,1503.4,547.6,1507.7,545.7C1510.7,543.8,1512.3,543.8,1515.3,543.8C1519.6,543.8,1521.7,545.0,1526.0,546.0C1533.6,547.8,1537.5,550.0,1545.1,551.0C1552.3,552.0,1556.0,552.0,1563.2,552.0C1568.3,552.0,1570.9,552.0,1576.0,547.0C1580.2,542.0,1582.4,532.5,1586.6,524.7C1590.0,518.5,1591.7,514.7,1595.1,511.9C1600.2,507.7,1602.8,507.1,1607.9,507.1C1615.5,507.1,1619.4,509.0,1627.0,513.0C1631.3,515.2,1633.4,518.7,1637.7,522.6C1643.1,527.5,1645.7,531.2,1651.1,535.0C1655.5,538.1,1657.7,540.0,1662.1,540.0C1667.7,540.0,1670.4,532.3,1676.0,528.0C1681.5,523.7,1684.3,518.5,1689.8,518.5C1695.3,518.5,1698.1,522.9,1703.6,530.0C1709.1,537.1,1711.9,545.4,1717.4,554.0C1725.2,566.2,1729.0,570.6,1736.8,582.0C1742.5,590.4,1751.0,603.4,1751.0,603.4L1751.0,660L109.2,660Z"/><path fill="#6b65ee" d="M109.2,634.6C109.2,634.6,112.6,619.6,114.9,609.6C117.9,596.6,119.3,587.1,122.3,577.0C125.3,566.8,126.8,565.1,129.8,559.0C133.4,551.7,135.1,545.0,138.7,543.5C144.0,542.0,146.7,542.0,152.0,542.0C160.4,542.0,164.6,548.1,173.0,554.5C178.2,558.5,180.7,562.5,185.9,568.0C191.0,573.5,193.5,582.0,198.6,582.0C203.7,582.0,206.3,572.9,211.4,568.0C217.5,562.1,220.6,555.0,226.7,555.0C232.8,555.0,235.9,567.8,242.0,577.5C248.8,588.2,252.2,606.0,259.0,606.0C265.8,606.0,269.2,583.3,276.0,574.0C282.8,564.7,286.2,563.1,293.0,559.5C300.5,555.5,304.3,555.0,311.8,555.0C317.9,555.0,321.0,560.5,327.1,568.0C330.5,572.1,332.2,578.4,335.6,584.0C341.1,593.0,343.8,604.5,349.3,604.5C357.2,604.5,361.2,584.2,369.1,573.5C374.2,566.6,376.8,564.6,381.9,560.5C390.1,554.0,394.1,547.2,402.3,547.2C407.9,547.2,410.8,549.8,416.4,557.5C420.5,563.1,422.5,571.2,426.6,580.5C430.2,588.6,431.9,601.0,435.5,601.0C440.1,601.0,442.4,590.6,447.0,574.5C450.0,563.8,451.6,545.5,454.6,534.0C457.7,522.3,459.2,521.4,462.3,516.5C465.6,511.2,467.3,508.5,470.6,508.5C476.1,508.5,478.9,512.5,484.4,517.0C488.2,520.1,490.1,524.8,493.9,527.5C499.7,531.6,502.5,531.3,508.3,534.0C512.5,535.9,514.6,535.8,518.8,539.0C529.3,547.0,534.5,551.8,545.0,562.0C551.8,568.6,555.2,575.4,562.0,581.0C569.2,587.0,572.8,591.0,580.0,591.0C584.8,591.0,587.2,576.9,592.0,560.0C597.0,542.5,599.4,519.9,604.4,505.0C609.8,488.7,612.5,482.0,617.9,482.0C628.6,482.0,634.0,499.7,644.7,513.0C653.6,524.1,658.1,532.0,667.0,543.0C676.0,554.0,680.4,559.8,689.4,568.0C696.5,574.6,700.1,580.0,707.2,580.0C717.4,580.0,722.4,566.0,732.6,556.0C738.0,550.8,740.6,546.6,746.0,542.0C752.4,536.6,755.5,531.0,761.9,531.0C766.2,531.0,768.3,532.9,772.6,540.5C776.8,548.1,779.0,558.4,783.2,569.0C789.0,583.4,791.8,603.0,797.6,603.0C802.5,603.0,804.9,590.1,809.8,582.0C814.0,574.9,816.2,569.5,820.4,565.0C826.8,558.3,830.0,556.8,836.4,554.0C844.0,550.6,847.9,549.5,855.5,549.5C861.3,549.5,864.2,549.5,870.0,551.0C876.2,552.5,879.3,554.7,885.5,557.0C896.4,561.0,901.9,566.8,912.8,566.8C925.7,566.8,932.2,553.6,945.1,553.6C957.3,553.6,963.5,566.4,975.7,566.4C986.5,566.4,992.0,555.5,1002.8,555.5C1008.3,555.5,1011.1,562.2,1016.6,567.5C1023.8,574.4,1027.5,586.0,1034.7,586.0C1042.3,586.0,1046.2,574.3,1053.8,568.5C1061.5,562.7,1065.3,557.5,1073.0,557.0C1076.8,556.5,1078.8,556.5,1082.6,556.5C1086.4,556.5,1088.3,556.5,1092.1,557.5C1098.1,558.5,1101.0,559.9,1107.0,565.5C1111.3,569.5,1113.4,577.5,1117.7,581.5C1123.7,587.1,1126.8,589.5,1132.8,589.5C1140.4,589.5,1144.3,582.9,1151.9,575.0C1158.3,568.3,1161.5,561.9,1167.9,553.0C1175.5,542.3,1179.4,526.0,1187.0,526.0C1194.2,526.0,1197.9,529.3,1205.1,535.0C1211.5,540.1,1214.7,544.8,1221.1,553.0C1225.3,558.4,1227.5,562.9,1231.7,569.0C1235.5,574.5,1237.5,582.0,1241.3,582.0C1246.0,582.0,1248.3,576.0,1253.0,567.0C1255.4,562.4,1256.5,555.6,1258.9,548.0C1262.5,536.4,1264.3,523.5,1267.9,519.0C1271.5,514.5,1273.2,514.5,1276.8,514.5C1281.0,514.5,1283.0,515.0,1287.2,516.0C1293.2,517.4,1296.1,520.5,1302.1,520.5C1311.1,520.5,1315.5,518.5,1324.5,514.5C1330.5,511.9,1333.4,508.7,1339.4,504.0C1347.4,497.7,1351.5,487.0,1359.5,487.0C1364.5,487.0,1367.1,489.8,1372.1,498.0C1375.7,503.8,1377.5,514.2,1381.1,522.0C1384.9,530.2,1386.8,533.9,1390.6,538.0C1397.8,545.7,1401.5,551.5,1408.7,551.5C1415.5,551.5,1418.9,550.8,1425.7,548.0C1435.1,544.2,1439.7,535.0,1449.1,535.0C1454.7,535.0,1457.4,536.5,1463.0,545.0C1466.8,550.9,1468.8,562.4,1472.6,571.0C1476.8,580.4,1479.0,590.0,1483.2,590.0C1488.7,590.0,1491.5,569.5,1497.0,560.0C1501.3,552.7,1503.4,549.5,1507.7,548.0C1510.7,546.5,1512.3,546.5,1515.3,546.5C1519.6,546.5,1521.7,548.4,1526.0,549.1C1533.6,550.3,1537.5,550.4,1545.1,551.3C1552.3,552.1,1556.0,553.4,1563.2,553.4C1568.3,553.4,1570.9,553.4,1576.0,550.0C1580.2,546.6,1582.4,536.9,1586.6,530.0C1590.0,524.5,1591.7,521.4,1595.1,519.0C1600.2,515.4,1602.8,515.1,1607.9,515.1C1615.5,515.1,1619.4,515.1,1627.0,516.0C1631.3,516.9,1633.4,519.9,1637.7,523.5C1643.1,527.9,1645.7,532.2,1651.1,536.0C1655.5,539.2,1657.7,541.0,1662.1,541.0C1667.7,541.0,1670.4,533.4,1676.0,529.0C1681.5,524.6,1684.3,519.0,1689.8,519.0C1695.3,519.0,1698.1,523.8,1703.6,531.0C1709.1,538.2,1711.9,546.4,1717.4,555.0C1725.2,567.2,1729.0,571.7,1736.8,583.0C1742.5,591.3,1751.0,604.0,1751.0,604.0L1751.0,660L109.2,660Z"/><path fill="#0098e1" stroke="#45eee2" stroke-width="0.9" d="M109.2,634.6C109.2,634.6,112.6,619.6,114.9,609.7C117.9,596.8,119.3,587.4,122.3,577.5C125.3,567.5,126.8,566.2,129.8,560.0C133.4,552.7,135.1,545.3,138.7,543.8C144.0,542.3,146.7,542.3,152.0,542.3C160.4,542.3,164.6,548.4,173.0,554.9C178.2,558.9,180.7,563.0,185.9,568.5C191.0,573.9,193.5,582.1,198.6,582.1C203.7,582.1,206.3,573.4,211.4,568.5C217.5,562.6,220.6,555.2,226.7,555.2C232.8,555.2,235.9,568.0,242.0,577.7C248.8,588.5,252.2,606.6,259.0,606.6C265.8,606.6,269.2,583.7,276.0,574.3C282.8,564.9,286.2,563.4,293.0,559.8C300.5,555.9,304.3,555.5,311.8,555.5C317.9,555.5,321.0,560.8,327.1,568.3C330.5,572.4,332.2,578.9,335.6,584.5C341.1,593.5,343.8,604.9,349.3,604.9C357.2,604.9,361.2,584.7,369.1,574.0C374.2,567.1,376.8,565.1,381.9,561.0C390.1,554.5,394.1,547.4,402.3,547.4C407.9,547.4,410.8,550.2,416.4,558.0C420.5,563.6,422.5,571.7,426.6,581.0C430.2,589.1,431.9,601.5,435.5,601.5C440.1,601.5,442.4,591.0,447.0,575.0C450.0,564.4,451.6,546.4,454.6,535.0C457.7,523.4,459.2,522.5,462.3,517.5C465.6,512.1,467.3,509.1,470.6,509.1C476.1,509.1,478.9,513.2,484.4,517.8C488.2,520.9,490.1,525.6,493.9,528.4C499.7,532.6,502.5,532.4,508.3,535.1C512.5,537.0,514.6,536.7,518.8,539.9C529.3,547.9,534.5,552.8,545.0,563.0C551.8,569.6,555.2,576.4,562.0,582.0C569.2,588.0,572.8,592.0,580.0,592.0C584.8,592.0,587.2,577.9,592.0,561.0C597.0,543.5,599.4,520.9,604.4,506.0C609.8,489.7,612.5,483.0,617.9,483.0C628.6,483.0,634.0,500.7,644.7,514.0C653.6,525.1,658.1,533.0,667.0,544.0C676.0,555.0,680.4,560.2,689.4,569.0C696.5,576.0,700.1,583.6,707.2,583.6C717.4,583.6,722.4,567.4,732.6,556.8C738.0,551.2,740.6,547.7,746.0,543.0C752.4,537.5,755.5,531.3,761.9,531.3C766.2,531.3,768.3,533.2,772.6,540.9C776.8,548.5,779.0,559.0,783.2,569.6C789.0,584.0,791.8,603.6,797.6,603.6C802.5,603.6,804.9,590.5,809.8,582.3C814.0,575.2,816.2,569.7,820.4,565.3C826.8,558.7,830.0,557.3,836.4,554.7C844.0,551.6,847.9,551.0,855.5,551.0C861.3,551.0,864.2,551.8,870.0,553.5C876.2,555.4,879.3,557.4,885.5,560.0C896.4,564.6,901.9,571.5,912.8,571.5C925.7,571.5,932.2,556.6,945.1,556.6C957.3,556.6,963.5,567.2,975.7,567.2C986.5,567.2,992.0,555.9,1002.8,555.9C1008.3,555.9,1011.1,562.8,1016.6,568.1C1023.8,575.1,1027.5,586.7,1034.7,586.7C1042.3,586.7,1046.2,574.9,1053.8,569.1C1061.5,563.2,1065.3,558.2,1073.0,557.4C1076.8,556.6,1078.8,556.6,1082.6,556.6C1086.4,556.6,1088.3,556.6,1092.1,558.0C1098.1,559.4,1101.0,560.4,1107.0,566.0C1111.3,570.0,1113.4,577.9,1117.7,581.9C1123.7,587.5,1126.8,589.9,1132.8,589.9C1140.4,589.9,1144.3,583.5,1151.9,575.5C1158.3,568.8,1161.5,562.2,1167.9,553.2C1175.5,542.4,1179.4,526.1,1187.0,526.1C1194.2,526.1,1197.9,529.3,1205.1,535.1C1211.5,540.2,1214.7,545.0,1221.1,553.2C1225.3,558.6,1227.5,563.0,1231.7,569.1C1235.5,574.7,1237.5,582.4,1241.3,582.4C1246.0,582.4,1248.3,575.5,1253.0,567.0C1255.4,562.7,1256.5,556.2,1258.9,550.3C1262.5,541.2,1264.3,535.6,1267.9,529.5C1271.5,523.4,1273.2,519.8,1276.8,519.8C1281.0,519.8,1283.0,521.0,1287.2,522.0C1293.2,523.4,1296.1,525.7,1302.1,525.7C1311.1,525.7,1315.5,523.1,1324.5,519.0C1330.5,516.3,1333.4,512.8,1339.4,508.6C1347.4,503.0,1351.5,494.5,1359.5,494.5C1364.5,494.5,1367.1,497.1,1372.1,505.6C1375.7,511.7,1377.5,523.4,1381.1,531.0C1384.9,539.0,1386.8,540.2,1390.6,544.7C1397.8,553.3,1401.5,563.8,1408.7,563.8C1415.5,563.8,1418.9,563.8,1425.7,560.6C1435.1,557.4,1439.7,539.4,1449.1,539.4C1454.7,539.4,1457.4,544.9,1463.0,553.2C1466.8,558.9,1468.8,566.8,1472.6,574.5C1476.8,583.0,1479.0,593.6,1483.2,593.6C1488.7,593.6,1491.5,580.0,1497.0,572.3C1501.3,566.4,1503.4,563.8,1507.7,559.6C1510.7,556.6,1512.3,555.6,1515.3,554.5C1519.6,553.4,1521.7,553.4,1526.0,553.4C1533.6,553.4,1537.5,554.2,1545.1,555.5C1552.3,556.7,1556.0,559.8,1563.2,559.8C1568.3,559.8,1570.9,559.8,1576.0,556.6C1580.2,553.4,1582.4,544.0,1586.6,537.4C1590.0,532.1,1591.7,529.8,1595.1,526.8C1600.2,522.2,1602.8,518.3,1607.9,518.3C1615.5,518.3,1619.4,518.3,1627.0,519.4C1631.3,520.5,1633.4,523.2,1637.7,526.8C1643.1,531.3,1645.7,535.3,1651.1,539.8C1655.5,543.5,1657.7,547.4,1662.1,547.4C1667.7,547.4,1670.4,538.4,1676.0,534.2C1681.5,530.1,1684.3,526.6,1689.8,526.6C1695.3,526.6,1698.1,529.7,1703.6,537.0C1709.1,544.3,1711.9,554.6,1717.4,563.3C1725.2,575.6,1729.0,579.0,1736.8,589.5C1742.5,597.2,1751.0,608.9,1751.0,608.9L1751.0,660L109.2,660Z"/><path fill="#9a62f2" d="M540.0,656.0C540.0,656.0,576.0,648.5,600.0,648.0C640.0,647.5,660.0,647.5,700.0,647.5C715.2,647.5,722.8,648.5,738.0,648.5C748.4,648.5,753.6,639.4,764.0,639.4C775.2,639.4,780.8,655.0,792.0,656.5C807.2,658.0,830.0,658.0,830.0,658.0L830.0,660L540.0,660Z"/><defs><clipPath id="lc"><rect x="100" y="600" width="930" height="70"/></clipPath><clipPath id="lc2"><rect x="100" y="600" width="460" height="70"/></clipPath></defs><path fill="#ff5c70" d="M109.2,658.3C109.2,658.3,123.7,655.0,133.3,653.4C145.7,651.3,152.0,649.0,164.4,649.0C177.7,649.0,184.4,656.1,197.7,656.1C210.1,656.1,216.3,646.8,228.7,646.8C241.1,646.8,247.4,653.4,259.8,653.4C271.4,653.4,277.1,649.4,288.7,649.4C306.4,649.4,315.3,652.1,333.0,652.1C349.0,652.1,357.0,651.2,373.0,651.2C388.1,651.2,395.7,656.7,410.8,656.7C433.0,656.7,444.1,646.5,466.3,646.5C479.8,646.5,486.5,650.0,500.0,651.2C517.8,652.8,526.6,653.4,544.4,653.4C571.0,653.4,584.4,649.0,611.0,649.0C624.3,649.0,631.0,655.0,644.3,655.0C657.6,655.0,664.3,646.5,677.6,646.5C690.9,646.5,697.6,651.6,710.9,651.6C732.2,651.6,742.9,648.0,764.2,648.0C776.6,648.0,782.8,655.6,795.2,655.6C809.4,655.6,816.5,647.2,830.7,647.2C849.4,647.2,858.7,651.6,877.4,651.6C904.2,651.6,917.6,648.3,944.4,648.3C966.6,648.3,977.7,650.5,999.9,650.5C1024.7,650.5,1037.2,646.8,1062.0,646.8C1075.3,646.8,1082.0,648.3,1095.3,648.3C1106.0,648.3,1111.3,638.3,1122.0,638.3C1135.3,638.3,1142.0,655.0,1155.3,655.0C1177.5,655.0,1188.6,644.3,1210.8,644.3C1223.2,644.3,1229.4,649.4,1241.8,649.4C1254.2,649.4,1260.5,642.3,1272.9,642.3C1289.9,642.3,1298.3,653.1,1315.3,653.1C1334.7,653.1,1344.4,634.7,1363.8,634.7C1384.2,634.7,1394.5,649.3,1414.9,649.3C1429.2,649.3,1436.3,644.9,1450.6,644.9C1463.9,644.9,1470.5,654.4,1483.8,654.4C1506.3,654.4,1517.5,642.4,1540.0,642.4C1554.3,642.4,1561.4,653.5,1575.7,654.5C1598.2,655.5,1609.4,655.5,1631.9,655.5C1658.5,655.5,1671.7,655.0,1698.3,655.0C1719.4,655.0,1751.0,655.0,1751.0,655.0L1751.0,660L109.2,660Z"/><path fill="#8be86b" clip-path="url(#lc)" d="M109.2,658.3C109.2,658.3,123.7,655.0,133.3,653.4C145.7,651.3,152.0,649.0,164.4,649.0C177.7,649.0,184.4,656.1,197.7,656.1C210.1,656.1,216.3,646.8,228.7,646.8C241.1,646.8,247.4,653.4,259.8,653.4C271.4,653.4,277.1,649.4,288.7,649.4C306.4,649.4,315.3,652.1,333.0,652.1C349.0,652.1,357.0,651.2,373.0,651.2C388.1,651.2,395.7,656.7,410.8,656.7C433.0,656.7,444.1,646.5,466.3,646.5C479.8,646.5,486.5,650.0,500.0,651.2C517.8,652.8,526.6,653.4,544.4,653.4C571.0,653.4,584.4,649.0,611.0,649.0C624.3,649.0,631.0,655.0,644.3,655.0C657.6,655.0,664.3,646.5,677.6,646.5C690.9,646.5,697.6,651.6,710.9,651.6C732.2,651.6,742.9,648.0,764.2,648.0C776.6,648.0,782.8,655.6,795.2,655.6C809.4,655.6,816.5,647.2,830.7,647.2C849.4,647.2,858.7,651.6,877.4,651.6C904.2,651.6,917.6,648.3,944.4,648.3C966.6,648.3,977.7,650.5,999.9,650.5C1024.7,650.5,1037.2,646.8,1062.0,646.8C1075.3,646.8,1082.0,648.3,1095.3,648.3C1106.0,648.3,1111.3,638.3,1122.0,638.3C1135.3,638.3,1142.0,655.0,1155.3,655.0C1177.5,655.0,1188.6,644.3,1210.8,644.3C1223.2,644.3,1229.4,649.4,1241.8,649.4C1254.2,649.4,1260.5,642.3,1272.9,642.3C1289.9,642.3,1298.3,653.1,1315.3,653.1C1334.7,653.1,1344.4,634.7,1363.8,634.7C1384.2,634.7,1394.5,649.3,1414.9,649.3C1429.2,649.3,1436.3,644.9,1450.6,644.9C1463.9,644.9,1470.5,654.4,1483.8,654.4C1506.3,654.4,1517.5,642.4,1540.0,642.4C1554.3,642.4,1561.4,653.5,1575.7,654.5C1598.2,655.5,1609.4,655.5,1631.9,655.5C1658.5,655.5,1671.7,655.0,1698.3,655.0C1719.4,655.0,1751.0,655.0,1751.0,655.0L1751.0,660L109.2,660Z"/><path fill="#ff5c70" clip-path="url(#lc)" d="M109.2,660.2C109.2,660.2,123.7,656.9,133.3,655.3C145.7,653.2,152.0,650.9,164.4,650.9C177.7,650.9,184.4,658.0,197.7,658.0C210.1,658.0,216.3,648.7,228.7,648.7C241.1,648.7,247.4,655.3,259.8,655.3C271.4,655.3,277.1,651.3,288.7,651.3C306.4,651.3,315.3,654.0,333.0,654.0C349.0,654.0,357.0,653.1,373.0,653.1C388.1,653.1,395.7,658.6,410.8,658.6C433.0,658.6,444.1,648.4,466.3,648.4C479.8,648.4,486.5,651.9,500.0,653.1C517.8,654.7,526.6,655.3,544.4,655.3C571.0,655.3,584.4,650.9,611.0,650.9C624.3,650.9,631.0,656.9,644.3,656.9C657.6,656.9,664.3,648.4,677.6,648.4C690.9,648.4,697.6,653.5,710.9,653.5C732.2,653.5,742.9,649.9,764.2,649.9C776.6,649.9,782.8,657.5,795.2,657.5C809.4,657.5,816.5,649.1,830.7,649.1C849.4,649.1,858.7,653.5,877.4,653.5C904.2,653.5,917.6,650.2,944.4,650.2C966.6,650.2,977.7,652.4,999.9,652.4C1024.7,652.4,1037.2,648.7,1062.0,648.7C1075.3,648.7,1082.0,650.2,1095.3,650.2C1106.0,650.2,1111.3,640.2,1122.0,640.2C1135.3,640.2,1142.0,656.9,1155.3,656.9C1177.5,656.9,1188.6,646.2,1210.8,646.2C1223.2,646.2,1229.4,651.3,1241.8,651.3C1254.2,651.3,1260.5,644.2,1272.9,644.2C1289.9,644.2,1298.3,655.0,1315.3,655.0C1334.7,655.0,1344.4,636.6,1363.8,636.6C1384.2,636.6,1394.5,651.2,1414.9,651.2C1429.2,651.2,1436.3,646.8,1450.6,646.8C1463.9,646.8,1470.5,656.3,1483.8,656.3C1506.3,656.3,1517.5,644.3,1540.0,644.3C1554.3,644.3,1561.4,655.4,1575.7,656.4C1598.2,657.4,1609.4,657.4,1631.9,657.4C1658.5,657.4,1671.7,656.9,1698.3,656.9C1719.4,656.9,1751.0,656.9,1751.0,656.9L1751.0,660L109.2,660Z"/><path fill="#55a8f2" clip-path="url(#lc2)" d="M109.2,659.7C109.2,659.7,123.7,657.6,133.3,656.5C145.7,655.1,152.0,653.6,164.4,653.6C177.7,653.6,184.4,658.3,197.7,658.3C210.1,658.3,216.3,652.2,228.7,652.2C241.1,652.2,247.4,656.5,259.8,656.5C271.4,656.5,277.1,653.9,288.7,653.9C306.4,653.9,315.3,655.7,333.0,655.7C349.0,655.7,357.0,655.1,373.0,655.1C388.1,655.1,395.7,658.7,410.8,658.7C433.0,658.7,444.1,652.0,466.3,652.0C479.8,652.0,486.5,654.3,500.0,655.1C517.8,656.1,526.6,656.5,544.4,656.5C571.0,656.5,584.4,653.6,611.0,653.6C624.3,653.6,631.0,657.5,644.3,657.5C657.6,657.5,664.3,652.0,677.6,652.0C690.9,652.0,697.6,655.3,710.9,655.3C732.2,655.3,742.9,653.0,764.2,653.0C776.6,653.0,782.8,657.9,795.2,657.9C809.4,657.9,816.5,652.5,830.7,652.5C849.4,652.5,858.7,655.3,877.4,655.3C904.2,655.3,917.6,653.2,944.4,653.2C966.6,653.2,977.7,654.6,999.9,654.6C1024.7,654.6,1037.2,652.2,1062.0,652.2C1075.3,652.2,1082.0,653.2,1095.3,653.2C1106.0,653.2,1111.3,646.7,1122.0,646.7C1135.3,646.7,1142.0,657.5,1155.3,657.5C1177.5,657.5,1188.6,650.6,1210.8,650.6C1223.2,650.6,1229.4,653.9,1241.8,653.9C1254.2,653.9,1260.5,649.3,1272.9,649.3C1289.9,649.3,1298.3,656.3,1315.3,656.3C1334.7,656.3,1344.4,644.4,1363.8,644.4C1384.2,644.4,1394.5,653.8,1414.9,653.8C1429.2,653.8,1436.3,651.0,1450.6,651.0C1463.9,651.0,1470.5,657.2,1483.8,657.2C1506.3,657.2,1517.5,649.4,1540.0,649.4C1554.3,649.4,1561.4,656.6,1575.7,657.2C1598.2,657.9,1609.4,657.9,1631.9,657.9C1658.5,657.9,1671.7,657.5,1698.3,657.5C1719.4,657.5,1751.0,657.5,1751.0,657.5L1751.0,660L109.2,660Z"/><path fill="#ff6262" clip-path="url(#lc2)" d="M109.2,660.2C109.2,660.2,123.7,658.9,133.3,658.3C145.7,657.5,152.0,656.6,164.4,656.6C177.7,656.6,184.4,659.3,197.7,659.3C210.1,659.3,216.3,655.8,228.7,655.8C241.1,655.8,247.4,658.3,259.8,658.3C271.4,658.3,277.1,656.8,288.7,656.8C306.4,656.8,315.3,657.8,333.0,657.8C349.0,657.8,357.0,657.5,373.0,657.5C388.1,657.5,395.7,659.5,410.8,659.5C433.0,659.5,444.1,655.7,466.3,655.7C479.8,655.7,486.5,657.0,500.0,657.5C517.8,658.1,526.6,658.3,544.4,658.3C571.0,658.3,584.4,656.6,611.0,656.6C624.3,656.6,631.0,658.9,644.3,658.9C657.6,658.9,664.3,655.7,677.6,655.7C690.9,655.7,697.6,657.6,710.9,657.6C732.2,657.6,742.9,656.2,764.2,656.2C776.6,656.2,782.8,659.1,795.2,659.1C809.4,659.1,816.5,655.9,830.7,655.9C849.4,655.9,858.7,657.6,877.4,657.6C904.2,657.6,917.6,656.4,944.4,656.4C966.6,656.4,977.7,657.2,999.9,657.2C1024.7,657.2,1037.2,655.8,1062.0,655.8C1075.3,655.8,1082.0,656.4,1095.3,656.4C1106.0,656.4,1111.3,652.6,1122.0,652.6C1135.3,652.6,1142.0,658.9,1155.3,658.9C1177.5,658.9,1188.6,654.8,1210.8,654.8C1223.2,654.8,1229.4,656.8,1241.8,656.8C1254.2,656.8,1260.5,654.1,1272.9,654.1C1289.9,654.1,1298.3,658.2,1315.3,658.2C1334.7,658.2,1344.4,651.2,1363.8,651.2C1384.2,651.2,1394.5,656.7,1414.9,656.7C1429.2,656.7,1436.3,655.1,1450.6,655.1C1463.9,655.1,1470.5,658.7,1483.8,658.7C1506.3,658.7,1517.5,654.1,1540.0,654.1C1554.3,654.1,1561.4,658.3,1575.7,658.7C1598.2,659.1,1609.4,659.1,1631.9,659.1C1658.5,659.1,1671.7,658.9,1698.3,658.9C1719.4,658.9,1751.0,658.9,1751.0,658.9L1751.0,660L109.2,660Z"/><path fill="none" stroke="#6d8ff0" stroke-width="0.8" opacity="0.8" d="M109.2,659.2C109.2,659.2,123.7,657.8,133.3,657.0C145.7,656.1,152.0,655.0,164.4,655.0C177.7,655.0,184.4,658.2,197.7,658.2C210.1,658.2,216.3,654.1,228.7,654.1C241.1,654.1,247.4,657.0,259.8,657.0C271.4,657.0,277.1,655.2,288.7,655.2C306.4,655.2,315.3,656.4,333.0,656.4C349.0,656.4,357.0,656.0,373.0,656.0C388.1,656.0,395.7,658.5,410.8,658.5C433.0,658.5,444.1,653.9,466.3,653.9C479.8,653.9,486.5,655.5,500.0,656.0C517.8,656.7,526.6,657.0,544.4,657.0C571.0,657.0,584.4,655.0,611.0,655.0C624.3,655.0,631.0,657.8,644.3,657.8C657.6,657.8,664.3,653.9,677.6,653.9C690.9,653.9,697.6,656.2,710.9,656.2C732.2,656.2,742.9,654.6,764.2,654.6C776.6,654.6,782.8,658.0,795.2,658.0C809.4,658.0,816.5,654.2,830.7,654.2C849.4,654.2,858.7,656.2,877.4,656.2C904.2,656.2,917.6,654.7,944.4,654.7C966.6,654.7,977.7,655.7,999.9,655.7C1024.7,655.7,1037.2,654.1,1062.0,654.1C1075.3,654.1,1082.0,654.7,1095.3,654.7C1106.0,654.7,1111.3,650.2,1122.0,650.2C1135.3,650.2,1142.0,657.8,1155.3,657.8C1177.5,657.8,1188.6,652.9,1210.8,652.9C1223.2,652.9,1229.4,655.2,1241.8,655.2C1254.2,655.2,1260.5,652.0,1272.9,652.0C1289.9,652.0,1298.3,656.9,1315.3,656.9C1334.7,656.9,1344.4,648.6,1363.8,648.6C1384.2,648.6,1394.5,655.2,1414.9,655.2C1429.2,655.2,1436.3,653.2,1450.6,653.2C1463.9,653.2,1470.5,657.5,1483.8,657.5C1506.3,657.5,1517.5,652.1,1540.0,652.1C1554.3,652.1,1561.4,657.1,1575.7,657.5C1598.2,658.0,1609.4,658.0,1631.9,658.0C1658.5,658.0,1671.7,657.8,1698.3,657.8C1719.4,657.8,1751.0,657.8,1751.0,657.8"/><rect x="109" y="658" width="450" height="1" fill="#ff6fd8" opacity="0.7"/><rect x="880" y="657.3" width="871" height="1.7" fill="#4fe85c"/><path fill="#d6f062" d="M1705,659 Q1730,655 1751,652.5 L1751,659 Z"/><rect x="99" y="659.5" width="1652" height="1.2" fill="#c4c4c4"/></g>
  <g>
    <path d="M519.5,458.5 Q519.5,455.5 522.5,455.5 L620,455.5 L626,449.5 L632,455.5 L729.5,455.5 Q732.5,455.5 732.5,458.5 L732.5,619.5 Q732.5,622.5 729.5,622.5 L522.5,622.5 Q519.5,622.5 519.5,619.5 Z" fill="rgba(6,10,16,0.82)"/>
    <text x="525.7" y="470.8" style="font-size:12px;font-weight:bold;fill:#fff">Dec 18, 2024 02:46 PM</text>
    <rect x="525.5" y="479.4" width="12" height="12" fill="#4fe85c" stroke="#ffffff" stroke-opacity="0.35" stroke-width="1"/><text x="539.2" y="489.2" class="tt">openvpn (UDP/1194): 461 Kb/s</text><rect x="525.5" y="493.2" width="12" height="12" fill="#ff55f0" stroke="#ffffff" stroke-opacity="0.35" stroke-width="1"/><text x="539.2" y="503.1" class="tt">cleanerliverc (UDP/3481): 453 Kb/s</text><rect x="525.5" y="507.1" width="12" height="12" fill="#5c9cf0" stroke="#ffffff" stroke-opacity="0.35" stroke-width="1"/><text x="539.2" y="516.9" class="tt">xact-backup (TCP/911): 1 Mb/s</text><rect x="525.5" y="520.9" width="12" height="12" fill="#ff6262" stroke="#ffffff" stroke-opacity="0.35" stroke-width="1"/><text x="539.2" y="530.7" class="tt">openvpn (TCP/1194): 2 Mb/s</text><rect x="525.5" y="534.8" width="12" height="12" fill="#ff5c70" stroke="#ffffff" stroke-opacity="0.35" stroke-width="1"/><text x="539.2" y="544.6" class="tt">plethora (UDP/3480): 2 Mb/s</text><rect x="525.5" y="548.6" width="12" height="12" fill="#a062f0" stroke="#ffffff" stroke-opacity="0.35" stroke-width="1"/><text x="539.2" y="558.4" class="tt">kafka (TCP/9092): 1 Mb/s</text><rect x="525.5" y="562.5" width="12" height="12" fill="#0098e1" stroke="#ffffff" stroke-opacity="0.35" stroke-width="1"/><text x="539.2" y="572.3" class="tt">https (TCP/443): 106 Mb/s</text><rect x="525.5" y="576.4" width="12" height="12" fill="#45eee2" stroke="#ffffff" stroke-opacity="0.35" stroke-width="1"/><text x="539.2" y="586.1" class="tt">TCP/8887: 992 Kb/s</text><rect x="525.5" y="590.2" width="12" height="12" fill="#6b65ee" stroke="#ffffff" stroke-opacity="0.35" stroke-width="1"/><text x="539.2" y="600.0" class="tt">UDP/51820: 410 Kb/s</text><rect x="525.5" y="604.0" width="12" height="12" fill="#9360f7" stroke="#ffffff" stroke-opacity="0.35" stroke-width="1"/><text x="539.2" y="613.8" class="tt">stun (UDP/3478): 1 Mb/s</text>
  </g>
</svg>
<div class="nav"></div>
<svg class="abs" style="left:0;top:0" width="1802" height="940"><path fill="#bcc3cb" d="M30.0,907.7C30.0,907.7,33.7,905.1,36.1,903.4C39.3,901.1,40.9,899.4,44.1,897.6C47.3,895.7,48.9,895.2,52.1,894.0C55.9,892.6,57.8,891.8,61.7,891.0C67.4,890.2,70.2,890.2,75.9,890.2C84.9,890.2,89.4,890.4,98.5,891.4C104.0,892.1,106.8,893.2,112.3,894.4C117.8,895.6,120.5,897.3,125.9,897.3C131.4,897.3,134.2,895.9,139.7,895.0C146.2,894.0,149.5,892.5,156.1,892.5C162.6,892.5,165.9,894.5,172.5,896.1C179.8,897.9,183.4,900.9,190.7,900.9C198.0,900.9,201.7,897.5,209.0,896.0C216.3,894.4,219.9,894.0,227.2,893.1C235.3,892.1,239.3,891.1,247.4,891.1C254.0,891.1,257.2,891.9,263.8,893.7C267.5,894.6,269.3,896.7,272.9,898.0C278.8,900.1,281.8,902.1,287.6,902.1C296.1,902.1,300.4,898.7,308.9,897.0C314.4,895.9,317.1,895.5,322.6,894.8C331.4,893.7,335.7,892.7,344.5,892.7C350.6,892.7,353.6,893.1,359.6,894.4C364.0,895.3,366.2,896.7,370.6,898.3C374.4,899.7,376.3,901.7,380.1,901.7C385.1,901.7,387.5,900.0,392.5,897.2C395.7,895.4,397.4,892.2,400.6,890.3C403.9,888.2,405.6,888.1,408.9,887.2C412.4,886.3,414.2,885.7,417.8,885.7C423.7,885.7,426.7,886.2,432.6,886.9C436.7,887.3,438.7,888.1,442.8,888.5C449.0,889.1,452.1,889.0,458.2,889.3C462.8,889.6,465.0,889.4,469.5,890.0C480.8,891.4,486.4,892.4,497.6,894.3C504.9,895.4,508.6,896.5,515.9,897.5C523.6,898.6,527.5,899.4,535.2,899.4C540.3,899.4,542.9,897.0,548.1,894.1C553.4,891.2,556.0,887.3,561.4,884.8C567.2,882.1,570.1,881.0,575.9,881.0C587.4,881.0,593.1,884.1,604.6,886.4C614.2,888.2,619.0,889.6,628.5,891.4C638.2,893.2,643.0,894.3,652.6,895.5C660.2,896.4,664.0,896.7,671.7,896.7C682.6,896.7,688.0,894.8,698.9,893.4C704.7,892.6,707.6,891.9,713.3,891.1C720.1,890.2,723.5,889.3,730.4,889.3C735.0,889.3,737.3,889.7,741.8,891.0C746.4,892.4,748.7,894.3,753.2,896.1C759.4,898.5,762.5,901.6,768.7,901.6C773.9,901.6,776.5,899.5,781.8,898.1C786.3,896.9,788.6,895.9,793.1,895.0C800.0,893.7,803.4,893.1,810.3,892.5C818.5,891.7,822.6,891.5,830.8,891.5C837.0,891.5,840.1,891.5,846.4,891.8C853.0,892.1,856.3,892.7,863.0,893.1C874.7,893.9,880.6,894.7,892.3,894.7C906.2,894.7,913.1,892.4,926.9,892.4C940.1,892.4,946.6,894.8,959.8,894.8C971.4,894.8,977.2,893.4,988.9,893.4C994.8,893.4,997.7,894.0,1003.7,894.6C1011.4,895.2,1015.3,896.4,1023.1,896.4C1031.3,896.4,1035.4,895.8,1043.6,894.9C1051.8,894.1,1055.9,893.7,1064.2,892.2C1068.3,891.5,1070.4,890.1,1074.5,889.3C1078.6,888.6,1080.6,888.4,1084.7,888.4C1091.1,888.4,1094.3,889.5,1100.7,891.1C1105.3,892.3,1107.6,894.3,1112.2,895.3C1118.6,896.7,1121.9,897.3,1128.4,897.3C1136.6,897.3,1140.7,896.9,1148.8,895.6C1155.7,894.6,1159.1,892.9,1166.0,891.3C1174.2,889.4,1178.3,887.1,1186.5,887.1C1194.3,887.1,1198.2,888.2,1205.9,889.3C1212.8,890.3,1216.2,890.9,1223.1,892.4C1227.7,893.4,1229.9,894.6,1234.5,895.6C1238.6,896.6,1240.7,897.3,1244.8,897.3C1249.8,897.3,1252.3,896.2,1257.3,893.8C1259.9,892.7,1261.1,890.1,1263.7,888.5C1267.5,886.2,1269.5,885.3,1273.3,884.2C1277.1,883.2,1279.0,883.2,1282.9,883.2C1287.3,883.2,1289.6,883.6,1294.0,883.9C1300.4,884.3,1303.6,885.0,1310.0,885.0C1319.6,885.0,1324.4,884.2,1334.1,883.5C1340.4,883.0,1343.6,882.6,1350.0,882.0C1358.7,881.1,1363.0,879.7,1371.6,879.7C1377.0,879.7,1379.7,880.2,1385.1,881.7C1389.0,882.8,1390.9,884.7,1394.8,886.2C1398.9,887.7,1400.9,888.6,1405.0,889.3C1412.7,890.6,1416.6,891.1,1424.4,891.1C1431.7,891.1,1435.3,891.1,1442.6,890.6C1452.7,890.0,1457.7,887.5,1467.8,887.5C1473.7,887.5,1476.7,887.9,1482.7,889.7C1486.8,890.9,1488.8,893.5,1493.0,894.9C1497.5,896.5,1499.8,897.3,1504.3,897.3C1510.3,897.3,1513.2,894.5,1519.2,892.9C1523.7,891.7,1526.0,891.0,1530.6,890.2C1533.9,889.7,1535.5,889.5,1538.8,889.5C1543.4,889.5,1545.7,890.1,1550.3,890.4C1558.5,891.1,1562.6,892.0,1570.8,892.0C1578.5,892.0,1582.4,892.0,1590.2,891.3C1595.7,890.9,1598.4,890.5,1603.9,889.4C1608.5,888.4,1610.7,887.2,1615.3,886.1C1618.9,885.2,1620.8,884.9,1624.4,884.5C1629.9,883.8,1632.7,883.4,1638.1,883.4C1646.3,883.4,1650.4,883.9,1658.6,884.6C1663.2,885.0,1665.5,885.3,1670.1,886.1C1675.9,887.1,1678.8,888.3,1684.5,889.2C1689.2,890.0,1691.6,890.4,1696.3,890.4C1702.3,890.4,1705.3,889.1,1711.2,888.3C1717.1,887.4,1720.1,886.0,1726.0,886.0C1732.0,886.0,1734.9,886.6,1740.8,887.8C1746.8,889.1,1749.7,890.8,1755.6,892.3C1764.0,894.3,1768.1,894.8,1776.5,896.7C1782.6,898.1,1791.7,900.5,1791.7,900.5L1791.7,912L30.0,912Z"/><path fill="none" stroke="#6b8390" stroke-width="1" d="M30.0,907.7C30.0,907.7,33.7,905.1,36.1,903.4C39.3,901.1,40.9,899.4,44.1,897.6C47.3,895.7,48.9,895.2,52.1,894.0C55.9,892.6,57.8,891.8,61.7,891.0C67.4,890.2,70.2,890.2,75.9,890.2C84.9,890.2,89.4,890.4,98.5,891.4C104.0,892.1,106.8,893.2,112.3,894.4C117.8,895.6,120.5,897.3,125.9,897.3C131.4,897.3,134.2,895.9,139.7,895.0C146.2,894.0,149.5,892.5,156.1,892.5C162.6,892.5,165.9,894.5,172.5,896.1C179.8,897.9,183.4,900.9,190.7,900.9C198.0,900.9,201.7,897.5,209.0,896.0C216.3,894.4,219.9,894.0,227.2,893.1C235.3,892.1,239.3,891.1,247.4,891.1C254.0,891.1,257.2,891.9,263.8,893.7C267.5,894.6,269.3,896.7,272.9,898.0C278.8,900.1,281.8,902.1,287.6,902.1C296.1,902.1,300.4,898.7,308.9,897.0C314.4,895.9,317.1,895.5,322.6,894.8C331.4,893.7,335.7,892.7,344.5,892.7C350.6,892.7,353.6,893.1,359.6,894.4C364.0,895.3,366.2,896.7,370.6,898.3C374.4,899.7,376.3,901.7,380.1,901.7C385.1,901.7,387.5,900.0,392.5,897.2C395.7,895.4,397.4,892.2,400.6,890.3C403.9,888.2,405.6,888.1,408.9,887.2C412.4,886.3,414.2,885.7,417.8,885.7C423.7,885.7,426.7,886.2,432.6,886.9C436.7,887.3,438.7,888.1,442.8,888.5C449.0,889.1,452.1,889.0,458.2,889.3C462.8,889.6,465.0,889.4,469.5,890.0C480.8,891.4,486.4,892.4,497.6,894.3C504.9,895.4,508.6,896.5,515.9,897.5C523.6,898.6,527.5,899.4,535.2,899.4C540.3,899.4,542.9,897.0,548.1,894.1C553.4,891.2,556.0,887.3,561.4,884.8C567.2,882.1,570.1,881.0,575.9,881.0C587.4,881.0,593.1,884.1,604.6,886.4C614.2,888.2,619.0,889.6,628.5,891.4C638.2,893.2,643.0,894.3,652.6,895.5C660.2,896.4,664.0,896.7,671.7,896.7C682.6,896.7,688.0,894.8,698.9,893.4C704.7,892.6,707.6,891.9,713.3,891.1C720.1,890.2,723.5,889.3,730.4,889.3C735.0,889.3,737.3,889.7,741.8,891.0C746.4,892.4,748.7,894.3,753.2,896.1C759.4,898.5,762.5,901.6,768.7,901.6C773.9,901.6,776.5,899.5,781.8,898.1C786.3,896.9,788.6,895.9,793.1,895.0C800.0,893.7,803.4,893.1,810.3,892.5C818.5,891.7,822.6,891.5,830.8,891.5C837.0,891.5,840.1,891.5,846.4,891.8C853.0,892.1,856.3,892.7,863.0,893.1C874.7,893.9,880.6,894.7,892.3,894.7C906.2,894.7,913.1,892.4,926.9,892.4C940.1,892.4,946.6,894.8,959.8,894.8C971.4,894.8,977.2,893.4,988.9,893.4C994.8,893.4,997.7,894.0,1003.7,894.6C1011.4,895.2,1015.3,896.4,1023.1,896.4C1031.3,896.4,1035.4,895.8,1043.6,894.9C1051.8,894.1,1055.9,893.7,1064.2,892.2C1068.3,891.5,1070.4,890.1,1074.5,889.3C1078.6,888.6,1080.6,888.4,1084.7,888.4C1091.1,888.4,1094.3,889.5,1100.7,891.1C1105.3,892.3,1107.6,894.3,1112.2,895.3C1118.6,896.7,1121.9,897.3,1128.4,897.3C1136.6,897.3,1140.7,896.9,1148.8,895.6C1155.7,894.6,1159.1,892.9,1166.0,891.3C1174.2,889.4,1178.3,887.1,1186.5,887.1C1194.3,887.1,1198.2,888.2,1205.9,889.3C1212.8,890.3,1216.2,890.9,1223.1,892.4C1227.7,893.4,1229.9,894.6,1234.5,895.6C1238.6,896.6,1240.7,897.3,1244.8,897.3C1249.8,897.3,1252.3,896.2,1257.3,893.8C1259.9,892.7,1261.1,890.1,1263.7,888.5C1267.5,886.2,1269.5,885.3,1273.3,884.2C1277.1,883.2,1279.0,883.2,1282.9,883.2C1287.3,883.2,1289.6,883.6,1294.0,883.9C1300.4,884.3,1303.6,885.0,1310.0,885.0C1319.6,885.0,1324.4,884.2,1334.1,883.5C1340.4,883.0,1343.6,882.6,1350.0,882.0C1358.7,881.1,1363.0,879.7,1371.6,879.7C1377.0,879.7,1379.7,880.2,1385.1,881.7C1389.0,882.8,1390.9,884.7,1394.8,886.2C1398.9,887.7,1400.9,888.6,1405.0,889.3C1412.7,890.6,1416.6,891.1,1424.4,891.1C1431.7,891.1,1435.3,891.1,1442.6,890.6C1452.7,890.0,1457.7,887.5,1467.8,887.5C1473.7,887.5,1476.7,887.9,1482.7,889.7C1486.8,890.9,1488.8,893.5,1493.0,894.9C1497.5,896.5,1499.8,897.3,1504.3,897.3C1510.3,897.3,1513.2,894.5,1519.2,892.9C1523.7,891.7,1526.0,891.0,1530.6,890.2C1533.9,889.7,1535.5,889.5,1538.8,889.5C1543.4,889.5,1545.7,890.1,1550.3,890.4C1558.5,891.1,1562.6,892.0,1570.8,892.0C1578.5,892.0,1582.4,892.0,1590.2,891.3C1595.7,890.9,1598.4,890.5,1603.9,889.4C1608.5,888.4,1610.7,887.2,1615.3,886.1C1618.9,885.2,1620.8,884.9,1624.4,884.5C1629.9,883.8,1632.7,883.4,1638.1,883.4C1646.3,883.4,1650.4,883.9,1658.6,884.6C1663.2,885.0,1665.5,885.3,1670.1,886.1C1675.9,887.1,1678.8,888.3,1684.5,889.2C1689.2,890.0,1691.6,890.4,1696.3,890.4C1702.3,890.4,1705.3,889.1,1711.2,888.3C1717.1,887.4,1720.1,886.0,1726.0,886.0C1732.0,886.0,1734.9,886.6,1740.8,887.8C1746.8,889.1,1749.7,890.8,1755.6,892.3C1764.0,894.3,1768.1,894.8,1776.5,896.7C1782.6,898.1,1791.7,900.5,1791.7,900.5"/><rect x="30" y="911.5" width="1761.7" height="1.2" fill="#5e7682"/><text x="62.0" y="932" text-anchor="middle" class="nv">02:30 PM</text><text x="318.2" y="932" text-anchor="middle" class="nv">02:38 PM</text><text x="574.5" y="932" text-anchor="middle" class="nv">02:46 PM</text><text x="830.7" y="932" text-anchor="middle" class="nv">02:54 PM</text><text x="1086.9" y="932" text-anchor="middle" class="nv">03:02 PM</text><text x="1343.2" y="932" text-anchor="middle" class="nv">03:10 PM</text><text x="1791.6" y="932" text-anchor="middle" class="nv">03:24 PM</text></svg>
</body></html>
